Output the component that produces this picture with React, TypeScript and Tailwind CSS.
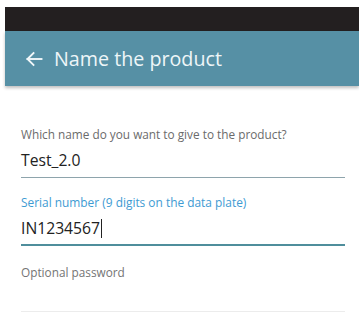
export default function App() {
  return (
    <div
      className="h-[318px] w-[359px] overflow-hidden bg-white pl-[5px] pt-[7px]"
      style={{ fontFamily: '"Open Sans", "Noto Sans", sans-serif' }}
    >
      {/* status bar */}
      <div className="h-[24px] bg-[#231f20]" />

      {/* app bar */}
      <div className="relative z-10 flex h-[55px] items-center bg-[#5690a5] pl-[17px] shadow-[0_2px_3px_rgba(0,0,0,0.25)]">
        <svg width="24" height="24" viewBox="0 0 24 24" fill="none" stroke="#f1f7f9" strokeWidth="1.9" strokeLinecap="square">
          <path d="M19.5 12H5.5" />
          <path d="M11.5 6l-6 6 6 6" />
        </svg>
        <span className="ml-[8px] text-[19.7px] leading-[28px] text-[#eef6f8]">Name the product</span>
      </div>

      {/* form */}
      <div className="pl-[16px] pr-[14px] pt-[40px]">
        <p className="text-[11.8px] leading-[16px] text-[#6b6b6b]">Which name do you want to give to the product?</p>
        <div className="mt-[6px] border-b border-[#8ea4ac] pb-[5px] text-[15.7px] leading-[24px] text-[#222]">
          Test_2.0
        </div>

        <p className="mt-[16px] text-[11.9px] leading-[16px] text-[#3e9bd3]">Serial number (9 digits on the data plate)</p>
        <div className="mt-[6px] flex items-center border-b-2 border-[#4f8e9c] pb-[4px] text-[15.7px] leading-[24px] text-[#222]">
          IN1234567
          <span className="ml-[1px] inline-block h-[19px] w-[1px] bg-[#222]" />
        </div>

        <p className="mt-[18px] text-[11.8px] leading-[16px] text-[#747474]">Optional password</p>
        <div className="mt-[6px] h-[26px] border-b border-[#ececec]" />
      </div>
    </div>
  );
}
